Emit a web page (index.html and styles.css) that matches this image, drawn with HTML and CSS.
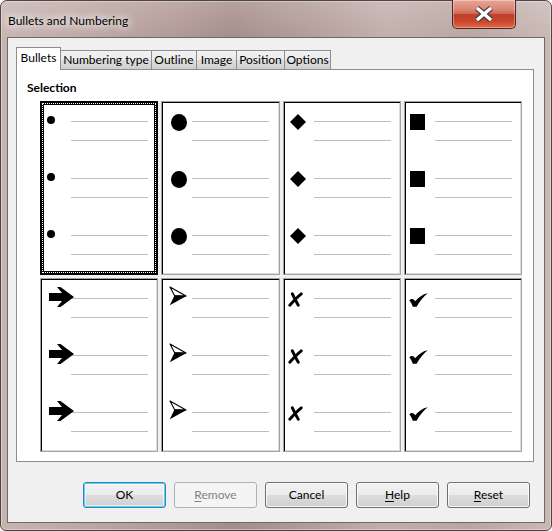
FILE: index.html
```html
<!DOCTYPE html>
<html>
<head>
<meta charset="utf-8">
<link rel="stylesheet" href="styles.css">
</head>
<body>
<div class="window">
  <div class="titlebar">
    <span class="title">Bullets and Numbering</span>
    <div class="close">
      <svg width="20" height="16" viewBox="0 0 20 16"><path d="M3,2 L17,14 M17,2 L3,14" stroke="#3c3c3c" stroke-width="5.6" fill="none"/><path d="M3,2 L17,14 M17,2 L3,14" stroke="#fff" stroke-width="3.4" fill="none"/></svg>
    </div>
  </div>
  <div class="client">
    <div class="tabs">
      <div class="tab active w1">Bullets</div>
      <div class="tab w2">Numbering type</div>
      <div class="tab w3">Outline</div>
      <div class="tab w4">Image</div>
      <div class="tab w5">Position</div>
      <div class="tab w6">Options</div>
    </div>
    <div class="panel">
      <div class="legend">Selection</div>
      <div class="valueset">
        <div class="cell selected">
          <div class="group"><div class="row"><div class="slot"><span class="b-dot"></span></div><div class="line"></div></div><div class="line l2"></div></div>
          <div class="group"><div class="row"><div class="slot"><span class="b-dot"></span></div><div class="line"></div></div><div class="line l2"></div></div>
          <div class="group"><div class="row"><div class="slot"><span class="b-dot"></span></div><div class="line"></div></div><div class="line l2"></div></div>
        </div>
        <div class="cell">
          <div class="group"><div class="row"><div class="slot"><span class="b-big"></span></div><div class="line"></div></div><div class="line l2"></div></div>
          <div class="group"><div class="row"><div class="slot"><span class="b-big"></span></div><div class="line"></div></div><div class="line l2"></div></div>
          <div class="group"><div class="row"><div class="slot"><span class="b-big"></span></div><div class="line"></div></div><div class="line l2"></div></div>
        </div>
        <div class="cell">
          <div class="group"><div class="row"><div class="slot"><svg class="b-diamond" width="16" height="16" viewBox="0 0 16 16"><polygon points="8,0 16,8 8,16 0,8"/></svg></div><div class="line"></div></div><div class="line l2"></div></div>
          <div class="group"><div class="row"><div class="slot"><svg class="b-diamond" width="16" height="16" viewBox="0 0 16 16"><polygon points="8,0 16,8 8,16 0,8"/></svg></div><div class="line"></div></div><div class="line l2"></div></div>
          <div class="group"><div class="row"><div class="slot"><svg class="b-diamond" width="16" height="16" viewBox="0 0 16 16"><polygon points="8,0 16,8 8,16 0,8"/></svg></div><div class="line"></div></div><div class="line l2"></div></div>
        </div>
        <div class="cell">
          <div class="group"><div class="row"><div class="slot"><span class="b-square"></span></div><div class="line"></div></div><div class="line l2"></div></div>
          <div class="group"><div class="row"><div class="slot"><span class="b-square"></span></div><div class="line"></div></div><div class="line l2"></div></div>
          <div class="group"><div class="row"><div class="slot"><span class="b-square"></span></div><div class="line"></div></div><div class="line l2"></div></div>
        </div>
        <div class="cell">
          <div class="group"><div class="row"><div class="slot"><svg class="b-arrow" width="25" height="20" viewBox="0 0 25 20"><path d="M0,6 H13 L8,0 H11.5 L25,10 L11.5,20 H8 L13,14 H0 Z"/></svg></div><div class="line"></div></div><div class="line l2"></div></div>
          <div class="group"><div class="row"><div class="slot"><svg class="b-arrow" width="25" height="20" viewBox="0 0 25 20"><path d="M0,6 H13 L8,0 H11.5 L25,10 L11.5,20 H8 L13,14 H0 Z"/></svg></div><div class="line"></div></div><div class="line l2"></div></div>
          <div class="group"><div class="row"><div class="slot"><svg class="b-arrow" width="25" height="20" viewBox="0 0 25 20"><path d="M0,6 H13 L8,0 H11.5 L25,10 L11.5,20 H8 L13,14 H0 Z"/></svg></div><div class="line"></div></div><div class="line l2"></div></div>
        </div>
        <div class="cell">
          <div class="group"><div class="row"><div class="slot"><svg class="b-head" width="18" height="20" viewBox="0 0 18 20"><path d="M1,1 L17,10 L5.5,9.5 Z" fill="#fff" stroke="#000" stroke-width="1.1" stroke-linejoin="round"/><path d="M5.5,9.5 L17.5,10 L0.8,19.2 Z" fill="#000"/></svg></div><div class="line"></div></div><div class="line l2"></div></div>
          <div class="group"><div class="row"><div class="slot"><svg class="b-head" width="18" height="20" viewBox="0 0 18 20"><path d="M1,1 L17,10 L5.5,9.5 Z" fill="#fff" stroke="#000" stroke-width="1.1" stroke-linejoin="round"/><path d="M5.5,9.5 L17.5,10 L0.8,19.2 Z" fill="#000"/></svg></div><div class="line"></div></div><div class="line l2"></div></div>
          <div class="group"><div class="row"><div class="slot"><svg class="b-head" width="18" height="20" viewBox="0 0 18 20"><path d="M1,1 L17,10 L5.5,9.5 Z" fill="#fff" stroke="#000" stroke-width="1.1" stroke-linejoin="round"/><path d="M5.5,9.5 L17.5,10 L0.8,19.2 Z" fill="#000"/></svg></div><div class="line"></div></div><div class="line l2"></div></div>
        </div>
        <div class="cell">
          <div class="group"><div class="row"><div class="slot"><svg class="b-x" width="15" height="15" viewBox="0 0 15 15"><path d="M4.3,1.8 C6,5 8,9.5 10.3,13.2 M13.3,1.8 C9.5,4.8 5.5,9 1.8,13.2" stroke="#000" stroke-width="2.9" stroke-linecap="round" fill="none"/></svg></div><div class="line"></div></div><div class="line l2"></div></div>
          <div class="group"><div class="row"><div class="slot"><svg class="b-x" width="15" height="15" viewBox="0 0 15 15"><path d="M4.3,1.8 C6,5 8,9.5 10.3,13.2 M13.3,1.8 C9.5,4.8 5.5,9 1.8,13.2" stroke="#000" stroke-width="2.9" stroke-linecap="round" fill="none"/></svg></div><div class="line"></div></div><div class="line l2"></div></div>
          <div class="group"><div class="row"><div class="slot"><svg class="b-x" width="15" height="15" viewBox="0 0 15 15"><path d="M4.3,1.8 C6,5 8,9.5 10.3,13.2 M13.3,1.8 C9.5,4.8 5.5,9 1.8,13.2" stroke="#000" stroke-width="2.9" stroke-linecap="round" fill="none"/></svg></div><div class="line"></div></div><div class="line l2"></div></div>
        </div>
        <div class="cell">
          <div class="group"><div class="row"><div class="slot"><svg class="b-check" width="19" height="14" viewBox="0 0 19 14"><path d="M0.3,7.2 C2.5,5.2 4.6,5.8 6.2,8.2 C9.5,4.3 13.5,1.2 18.8,0.2 C14.8,3.2 11,7.8 7.6,13.8 L3.8,13.8 C3,11.2 1.8,9 0.3,7.2 Z"/></svg></div><div class="line"></div></div><div class="line l2"></div></div>
          <div class="group"><div class="row"><div class="slot"><svg class="b-check" width="19" height="14" viewBox="0 0 19 14"><path d="M0.3,7.2 C2.5,5.2 4.6,5.8 6.2,8.2 C9.5,4.3 13.5,1.2 18.8,0.2 C14.8,3.2 11,7.8 7.6,13.8 L3.8,13.8 C3,11.2 1.8,9 0.3,7.2 Z"/></svg></div><div class="line"></div></div><div class="line l2"></div></div>
          <div class="group"><div class="row"><div class="slot"><svg class="b-check" width="19" height="14" viewBox="0 0 19 14"><path d="M0.3,7.2 C2.5,5.2 4.6,5.8 6.2,8.2 C9.5,4.3 13.5,1.2 18.8,0.2 C14.8,3.2 11,7.8 7.6,13.8 L3.8,13.8 C3,11.2 1.8,9 0.3,7.2 Z"/></svg></div><div class="line"></div></div><div class="line l2"></div></div>
        </div>
      </div>
    </div>
    <div class="buttons">
      <div class="btn default">OK</div>
      <div class="btn disabled"><u>R</u>emove</div>
      <div class="btn">Cancel</div>
      <div class="btn"><u>H</u>elp</div>
      <div class="btn"><u>R</u>eset</div>
    </div>
  </div>
</div>
</body>
</html>
```

FILE: styles.css
```css
* { box-sizing: border-box; }
html, body { margin: 0; padding: 0; background: #fff; }
body { font-family: "Lato", "Liberation Sans", sans-serif; font-size: 12px; color: #000; }

.window {
  width: 552px;
  height: 531px;
  border: 1px solid #4e4442;
  border-radius: 7px 7px 6px 6px;
  padding: 0 6px 7px 6px;
  display: flex;
  flex-direction: column;
  background:
    linear-gradient(180deg, rgba(255,255,255,0.18) 0px, rgba(255,255,255,0) 40px),
    linear-gradient(90deg, #c7b4b0 0%, #bba5a1 18%, #b09894 32%, #a48c88 42%, #b19b97 55%, #c1aeaa 70%, #b9a5a1 85%, #c9b8b4 100%);
  box-shadow: inset 0 0 0 1px rgba(255,255,255,0.35);
}

.titlebar {
  height: 36px;
  display: flex;
  justify-content: space-between;
  align-items: flex-start;
  padding-left: 1px;
  padding-right: 29px;
}
.title {
  margin-top: 12px;
  font-size: 12px;
  line-height: 15px;
  text-shadow: 0 0 8px #fff, 0 0 10px rgba(255,255,255,0.9), 0 0 14px rgba(255,255,255,0.7);
}
.close {
  margin-top: -1px;
  width: 64px;
  height: 29px;
  border: 1px solid #4a2620;
  border-top: none;
  border-radius: 0 0 5px 5px;
  background: linear-gradient(180deg, #e7a696 0%, #dc8a78 30%, #cf6a55 48%, #c0402a 52%, #c9442c 75%, #e06a48 100%);
  box-shadow: inset 0 0 0 1px rgba(255,255,255,0.35);
  display: flex;
  align-items: center;
  justify-content: center;
}

.client {
  flex: 1;
  border: 1px solid #6a6a6a;
  background: #f0f0f0;
  padding: 9px 10px 14px 8px;
  display: flex;
  flex-direction: column;
}

.tabs {
  display: flex;
  align-items: flex-end;
  height: 22px;
  position: relative;
  z-index: 1;
}
.tab {
  height: 19px;
  border: 1px solid #8c8e94;
  border-bottom: none;
  border-left: none;
  background: linear-gradient(180deg, #f2f2f2 0%, #ebebeb 50%, #dddddd 51%, #cfcfcf 100%);
  text-align: center;
  line-height: 18px;
  font-size: 12px;
}
.tab.active {
  height: 23px;
  margin-bottom: -1px;
  border-left: 1px solid #8c8e94;
  background: #fff;
  line-height: 20px;
}
.w1 { width: 45px; }
.w2 { width: 91px; }
.w3 { width: 45px; }
.w4 { width: 40px; }
.w5 { width: 48px; }
.w6 { width: 46px; }

.panel {
  width: 518px;
  height: 393px;
  background: #fff;
  border: 1px solid #8c8e94;
  padding: 10px 10px 0 10px;
}
.legend {
  font-weight: bold;
  line-height: 16px;
  height: 16px;
}
.valueset {
  margin: 5px 0 0 13px;
  width: 482px;
  height: 351px;
  display: grid;
  grid-template-columns: repeat(4, 1fr);
  grid-template-rows: 174px 174px;
  gap: 3px 3px;
  background: #f0f0f0;
}

.cell {
  position: relative;
  overflow: hidden;
  background: #fff;
  border: 1px solid #a3a3a3;
  box-shadow: inset 1px 1px 0 #000, inset -1px -1px 0 #dcdcdc;
  padding-top: 9px;
}
.cell.selected { border-color: #000; box-shadow: none; }
.cell.selected::before {
  content: "";
  position: absolute;
  inset: 0;
  border: 1px solid #000;
  box-shadow: inset 0 0 0 2px #000;
}
.cell.selected::after {
  content: "";
  position: absolute;
  inset: 1px;
  border: 1px dotted #fff;
}

.group { margin-bottom: 27px; }
.group:last-child { margin-bottom: 0; }
.row {
  display: flex;
  align-items: center;
  height: 21px;
}
.slot {
  width: 30px;
  flex: none;
  display: flex;
  align-items: center;
  position: relative;
  z-index: 1;
  height: 21px;
}
.line {
  width: 77px;
  height: 1px;
  background: #bdbdbd;
}
.line.l2 { margin: 8px 0 0 30px; }

.b-dot {
  display: block;
  width: 8px;
  height: 8px;
  border-radius: 50%;
  background: #000;
  margin-left: 6px;
  position: relative;
  top: -2px;
}
.b-big {
  display: block;
  width: 16px;
  height: 17px;
  border-radius: 50%;
  background: #000;
  margin-left: 9px;
  position: relative;
  top: 1px;
}
.b-diamond { display: block; margin-left: 6px; }
.b-square {
  display: block;
  width: 15px;
  height: 16px;
  background: #000;
  margin-left: 5px;
}
.b-arrow { display: block; margin-left: 8px; flex: none; position: relative; top: -2px; }
.b-head { display: block; margin-left: 7px; flex: none; position: relative; top: -3px; }
.b-x { display: block; margin-left: 4px; position: relative; top: 1px; }
.b-check { display: block; margin-left: 4px; position: relative; top: 1px; }

.buttons {
  margin-top: auto;
  display: flex;
  justify-content: flex-end;
  gap: 8px;
  padding-right: 4px;
}
.btn {
  width: 83px;
  height: 26px;
  border: 1px solid #707070;
  border-radius: 3px;
  background: linear-gradient(180deg, #f2f2f2 0%, #ebebeb 50%, #dddddd 51%, #cfcfcf 100%);
  box-shadow: inset 0 0 0 1px rgba(255,255,255,0.8);
  text-align: center;
  line-height: 23px;
  font-size: 12px;
}
.btn.default {
  border-color: #3c7fb1;
  box-shadow: inset 0 0 0 1px #48d8fb, inset 0 0 0 2px rgba(255,255,255,0.6);
  background: linear-gradient(180deg, #f2f2f2 0%, #ebebeb 50%, #dddddd 51%, #cfcfcf 100%);
}
.btn.disabled {
  border-color: #adb2b5;
  background: #f4f4f4;
  color: #838383;
  box-shadow: none;
}
.btn u { text-decoration: underline; text-underline-offset: 2px; }
```
